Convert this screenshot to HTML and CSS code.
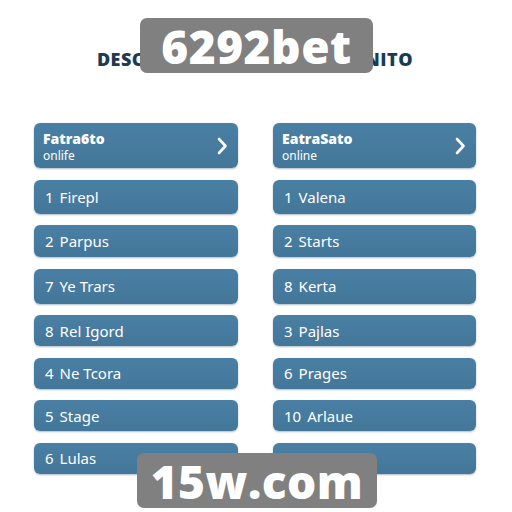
FILE: index.html
```html
<!DOCTYPE html>
<html lang="pt">

<head>
    <meta charset="UTF-8">
    <meta name="viewport" content="width=device-width, initial-scale=1.0">
    <title>6292bet</title>
    <link rel="stylesheet" href="styles.css">
</head>

<body>

    <div class="page">
        <h1 class="heading">DESCUBRA O UNIVERSO INFINITO</h1>

        <div class="list-grid">
            <!-- left column -->
            <div class="card card-head">
                <div class="head-text">
                    <span class="head-title">Fatra6to</span>
                    <span class="head-sub">onlife</span>
                </div>
                <svg class="chevron" viewBox="0 0 12 18" width="12" height="18">
                    <path d="M3 2 L9.5 9 L3 16" fill="none" stroke="#fff" stroke-width="2.6" stroke-linecap="round" stroke-linejoin="round"/>
                </svg>
            </div>
            <div class="card"><span class="num">1</span>Firepl</div>
            <div class="card"><span class="num">2</span>Parpus</div>
            <div class="card"><span class="num">7</span>Ye Trars</div>
            <div class="card"><span class="num">8</span>Rel Igord</div>
            <div class="card"><span class="num">4</span>Ne Tcora</div>
            <div class="card"><span class="num">5</span>Stage</div>
            <div class="card"><span class="num">6</span>Lulas</div>

            <!-- right column -->
            <div class="card card-head">
                <div class="head-text">
                    <span class="head-title">EatraSato</span>
                    <span class="head-sub">online</span>
                </div>
                <svg class="chevron" viewBox="0 0 12 18" width="12" height="18">
                    <path d="M3 2 L9.5 9 L3 16" fill="none" stroke="#fff" stroke-width="2.6" stroke-linecap="round" stroke-linejoin="round"/>
                </svg>
            </div>
            <div class="card"><span class="num">1</span>Valena</div>
            <div class="card"><span class="num">2</span>Starts</div>
            <div class="card"><span class="num">8</span>Kerta</div>
            <div class="card"><span class="num">3</span>Pajlas</div>
            <div class="card"><span class="num">6</span>Prages</div>
            <div class="card"><span class="num">10</span>Arlaue</div>
            <div class="card"></div>
        </div>
    </div>

    <div class="badge badge-top">6292bet</div>
    <div class="badge badge-bottom">15w.com</div>

</body>

</html>
```

FILE: styles.css
```css
:root {
    --card-radius: 6px;
    --badge-bg: #808080;
}

* {
    margin: 0;
    padding: 0;
    box-sizing: border-box;
}

body {
    width: 512px;
    height: 512px;
    background: #fff;
    font-family: "Noto Sans", "Liberation Sans", sans-serif;
    position: relative;
    overflow: hidden;
}

.page {
    display: flex;
    flex-direction: column;
    padding-top: 47px;
}

.heading {
    align-self: center;
    margin-left: -2px;
    font-family: "Open Sans", sans-serif;
    font-weight: 800;
    font-size: 18px;
    line-height: 24px;
    color: #1b3a54;
    letter-spacing: 0.5px;
    white-space: nowrap;
}

.list-grid {
    margin-top: 52px;
    margin-left: 34px;
    display: grid;
    grid-template-columns: 204px 203px;
    grid-template-rows: 45px 34px 32px 35px 31px 31px 31px 31px;
    grid-auto-flow: column;
    column-gap: 35px;
    row-gap: 11.5px;
}

.card {
    display: flex;
    align-items: center;
    padding-left: 11px;
    background: linear-gradient(180deg, #4a7fa5 0%, #437799 100%);
    border-radius: var(--card-radius);
    box-shadow: 0 1px 2px rgba(30, 60, 90, 0.35);
    color: #fff;
    font-size: 15px;
}

.card .num {
    margin-right: 6px;
}

.card-head {
    justify-content: space-between;
    padding-left: 9px;
    padding-right: 10px;
}

.head-text {
    display: flex;
    flex-direction: column;
    gap: 3px;
    padding-top: 2px;
}

.head-title {
    font-family: "Open Sans", sans-serif;
    font-weight: 800;
    font-size: 14px;
    line-height: 14px;
}

.head-sub {
    font-size: 12px;
    line-height: 13px;
}

.chevron {
    display: block;
}

/* overlay labels */
.badge {
    position: absolute;
    display: flex;
    align-items: center;
    justify-content: center;
    background: var(--badge-bg);
    border-radius: 7px;
    color: #fff;
    font-family: "Open Sans", sans-serif;
    font-weight: 800;
    font-size: 46px;
    letter-spacing: 0.5px;
}

.badge-top {
    left: 140px;
    top: 18px;
    width: 233px;
    height: 55px;
}

.badge-bottom {
    left: 137px;
    top: 453px;
    width: 240px;
    height: 55px;
}
```
